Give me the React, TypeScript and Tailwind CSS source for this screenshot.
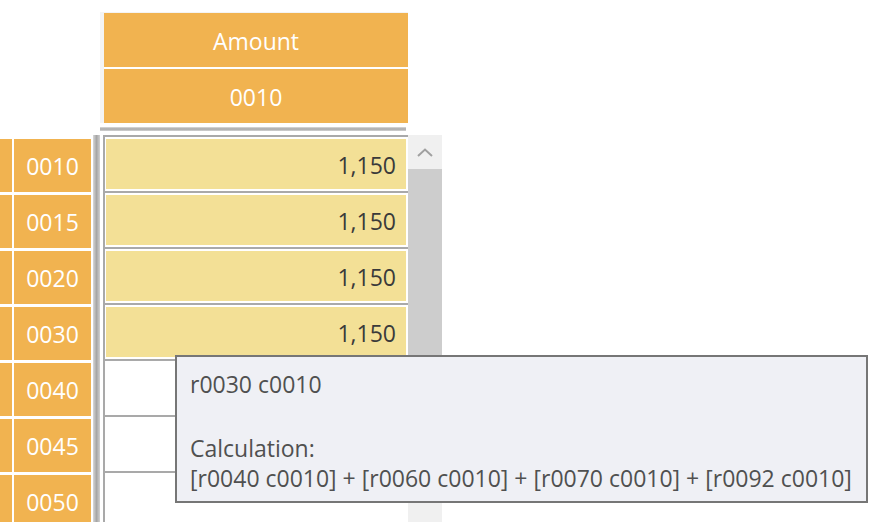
import React from 'react';

const ROWS = [
    { code: '0010', value: '1,150' },
    { code: '0015', value: '1,150' },
    { code: '0020', value: '1,150' },
    { code: '0030', value: '1,150' },
    { code: '0040', value: null },
    { code: '0045', value: null },
    { code: '0050', value: null },
];

const ChevronUp: React.FC = () => (
    <svg width="16" height="9" viewBox="0 0 16 9" fill="none">
        <polyline points="1,8 8,1.5 15,8" stroke="#a0a0a0" strokeWidth="2" />
    </svg>
);

export default function App() {
    return (
        <div className="relative w-[891px] h-[522px] overflow-hidden bg-white font-['Open_Sans','Noto_Sans',sans-serif] text-[23px]">
            {/* column header */}
            <div className="ml-[100px] mt-[12px] w-[308px] border-l-[4px] border-t border-[#f4f4f4] flex flex-col gap-[2px]">
                <div className="h-[54px] bg-[#f1b350] text-white flex items-center justify-center pt-[3px]">Amount</div>
                <div className="h-[54px] bg-[#f1b350] text-white flex items-center justify-center pt-[3px]">0010</div>
            </div>
            <div className="ml-[100px] mt-[4px] w-[306px] h-[4px] bg-linear-to-b from-[#dcdcdc] via-[#a8a8a8] to-[#d4d4d4]" />

            {/* body */}
            <div className="flex mt-[4px]">
                <div className="w-[91px] pt-[4px] flex flex-col">
                    {ROWS.map((r) => (
                        <div key={r.code} className="h-[56px] border-b-[3px] border-white flex gap-[2px]">
                            <div className="w-[12px] bg-[#f1b350]" />
                            <div className="flex-1 bg-[#f1b350] text-white flex items-center justify-center pt-[2px]">{r.code}</div>
                        </div>
                    ))}
                </div>
                <div className="ml-[2px] w-[7px] h-[400px] bg-linear-to-r from-[#d8d8d8] via-[#a6a6a6] to-[#d0d0d0]" />
                <div className="ml-[3px] w-[305px] border-l-2 border-[#a9a9a9] flex flex-col">
                    {ROWS.map((r) => (
                        <div key={r.code} className="h-[56px] border-t-2 border-[#a9a9a9] pl-[1px] pr-[2px] py-[2px]">
                            {r.value ? (
                                <div className="h-[50px] bg-[#f3e096] text-[#3a3a3a] flex items-center justify-end pr-[10px] pt-[3px]">
                                    {r.value}
                                </div>
                            ) : null}
                        </div>
                    ))}
                </div>
                <div className="w-[34px] h-[400px] flex flex-col bg-[#f0f0f0]">
                    <div className="h-[34px] flex items-center justify-center">
                        <ChevronUp />
                    </div>
                    <div className="h-[300px] bg-[#cdcdcd]" />
                </div>
            </div>

            {/* tooltip */}
            <div className="absolute left-[175px] top-[355px] w-[693px] h-[148px] border-2 border-[#767676] bg-[#eff0f5] text-[#505050] text-[23px] leading-[30px] px-[13px] pt-[12px] whitespace-nowrap">
                <div>r0030 c0010</div>
                <div className="mt-[34px]">Calculation:</div>
                <div>[r0040 c0010] + [r0060 c0010] + [r0070 c0010] + [r0092 c0010]</div>
            </div>
        </div>
    );
}
